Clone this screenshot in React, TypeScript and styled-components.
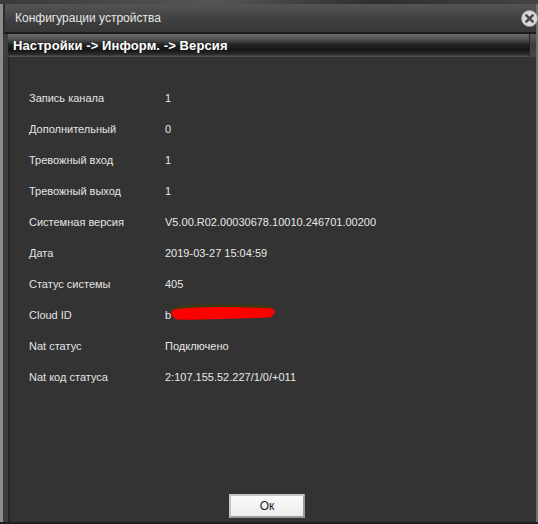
import styled, { createGlobalStyle } from 'styled-components';

const GlobalStyle = createGlobalStyle`
  html, body {
    margin: 0;
    padding: 0;
    background: #2b2b2b;
    overflow: hidden;
  }
`;

const rows: { label: string; value: string; hidden?: boolean }[] = [
  { label: 'Запись канала', value: '1' },
  { label: 'Дополнительный', value: '0' },
  { label: 'Тревожный вход', value: '1' },
  { label: 'Тревожный выход', value: '1' },
  { label: 'Системная версия', value: 'V5.00.R02.00030678.10010.246701.00200' },
  { label: 'Дата', value: '2019-03-27 15:04:59' },
  { label: 'Статус системы', value: '405' },
  { label: 'Cloud ID', value: 'b', hidden: true },
  { label: 'Nat статус', value: 'Подключено' },
  { label: 'Nat код статуса', value: '2:107.155.52.227/1/0/+011' },
];

const App = () => {
  return (
    <>
      <GlobalStyle />
      <Screen>
        <TopStrip />
        <Window>
          <TitleBar>
            <Title>Конфигурации устройства</Title>
            <CloseButton>
              <svg width="17" height="17" viewBox="0 0 17 17">
                <circle cx="8.5" cy="8.5" r="8" fill="#d9d9d9" stroke="#9a9a9a" strokeWidth="0.8" />
                <path d="M5.3 5.3 L11.7 11.7 M11.7 5.3 L5.3 11.7" stroke="#4a4a4a" strokeWidth="2.6" strokeLinecap="round" />
              </svg>
            </CloseButton>
          </TitleBar>
          <Breadcrumb>
            <Crumb>Настройки -&gt; Информ. -&gt; Версия</Crumb>
            <CrumbEnd />
          </Breadcrumb>
          <Content>
            <InfoList>
              {rows.map((r) => (
                <Row key={r.label}>
                  <Label>{r.label}</Label>
                  <Value>
                    {r.value}
                    {r.hidden && (
                      <Scribble width="104" height="18" viewBox="0 0 104 18">
                        <path d="M3 4 C25 1 55 2 100 3" stroke="#3d3a12" strokeWidth="3" fill="none" />
                        <path d="M4 9 C28 6 62 6 100 8 M6 12 C32 13 62 11 98 10" stroke="#ff0000" strokeWidth="7" strokeLinecap="round" fill="none" />
                      </Scribble>
                    )}
                  </Value>
                </Row>
              ))}
            </InfoList>
            <Footer>
              <OkButton>Ок</OkButton>
            </Footer>
          </Content>
        </Window>
      </Screen>
    </>
  );
};

export default App;

const Screen = styled.div`
  width: 538px;
  height: 524px;
  display: flex;
  flex-direction: column;
  background: #1e1e1e;
`;

const TopStrip = styled.div`
  height: 4px;
  background: linear-gradient(to right, #3a3a3a, #555 40%, #2e2e2e 70%, #444);
`;

const Window = styled.div`
  flex: 1;
  display: flex;
  flex-direction: column;
  margin-bottom: 2px;
  border-left: 3px solid #8c8c8c;
  border-right: 2px solid #6e6e6e;
  background: #333333;
`;

const TitleBar = styled.div`
  height: 28px;
  display: flex;
  align-items: center;
  justify-content: space-between;
  padding-left: 10px;
  background: linear-gradient(to bottom, #545454 0%, #4a4a4a 30%, #3e3e3e 60%, #383838 100%);
  border-left: 2px solid #2c2c2c;
  border-bottom: 2px solid #1c1c1c;
`;

const Title = styled.span`
  font-family: 'Liberation Sans', Arial, sans-serif;
  font-size: 12px;
  color: #e6e6e6;
`;

const CloseButton = styled.div`
  display: flex;
  align-items: center;
  margin-right: -2px;
  margin-top: 1px;
`;

const Breadcrumb = styled.div`
  height: 23px;
  display: flex;
  align-items: stretch;
  background: linear-gradient(
    to bottom,
    #6a6a6a 0%,
    #4f4f4f 25%,
    #242424 45%,
    #161616 70%,
    #2a2a2a 88%,
    #5a5a5a 100%
  );
  border-left: 5px solid #3e3e3e;
`;

const Crumb = styled.div`
  flex: 1;
  display: flex;
  align-items: center;
  padding-left: 5px;
  font-family: 'Liberation Sans', Arial, sans-serif;
  font-weight: bold;
  font-size: 13px;
  color: #ffffff;
  letter-spacing: 0.1px;
`;

const CrumbEnd = styled.div`
  width: 6px;
  background: linear-gradient(to bottom, #5c5c5c, #3a3a3a 50%, #484848);
  border-left: 1px solid #222;
`;

const Content = styled.div`
  flex: 1;
  display: flex;
  flex-direction: column;
  border-left: 5px solid #3c3c3c;
  box-shadow: inset 2px 0 0 #262626;
`;

const InfoList = styled.div`
  display: flex;
  flex-direction: column;
  padding: 25px 0 0 21px;
`;

const Row = styled.div`
  height: 31px;
  display: grid;
  grid-template-columns: 136px 1fr;
  align-items: center;
  font-family: 'Liberation Sans', Arial, sans-serif;
  font-size: 11px;
`;

const Label = styled.span`
  color: #e4e4e4;
`;

const Value = styled.span`
  position: relative;
  color: #e8e8e8;
`;

const Scribble = styled.svg`
  position: absolute;
  left: 6px;
  top: -5px;
`;

const Footer = styled.div`
  margin-top: auto;
  display: flex;
  justify-content: center;
  padding: 0 0 4px 0;
  margin-left: -10px;
`;

const OkButton = styled.button`
  width: 76px;
  height: 24px;
  padding: 0;
  background: linear-gradient(to bottom, #fbfbfb, #ececec);
  border: 2px solid #9a9a9a;
  border-top-color: #c8c8c8;
  border-left-color: #c8c8c8;
  font-family: 'Liberation Sans', Arial, sans-serif;
  font-size: 12px;
  color: #222;
  cursor: pointer;
`;
